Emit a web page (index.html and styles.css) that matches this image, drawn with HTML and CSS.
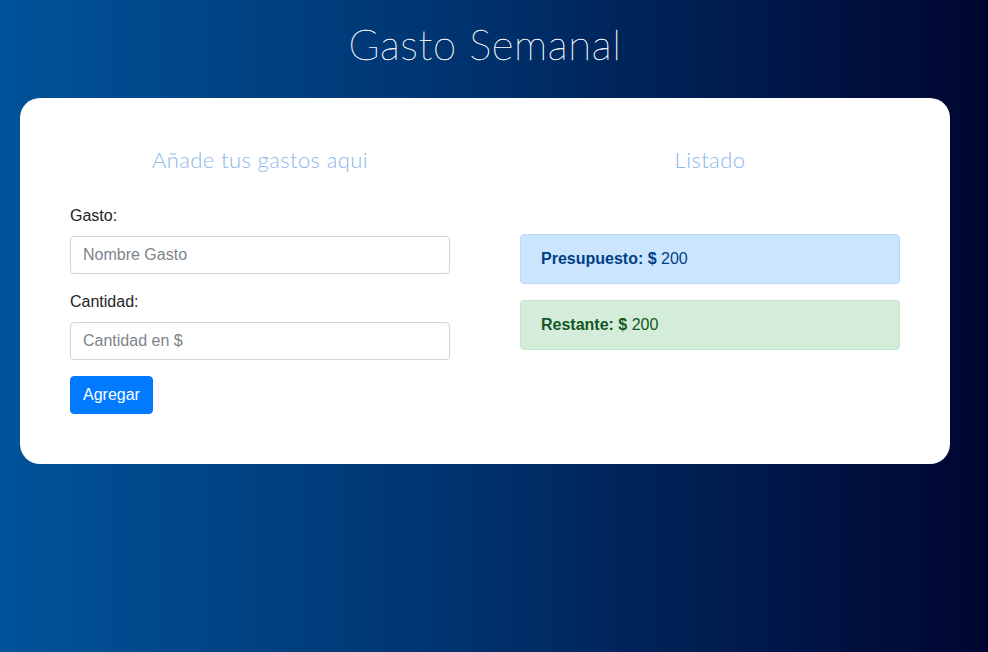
FILE: index.html
```html
<!DOCTYPE html>
<html lang="es">
<head>
<meta charset="utf-8">
<title>Gasto Semanal</title>
<link rel="stylesheet" href="styles.css">
</head>
<body>
<div class="page">
  <header class="header">
    <h1 class="title">Gasto Semanal</h1>
  </header>
  <main class="card">
    <section class="col">
      <h2 class="col-title">Añade tus gastos aqui</h2>
      <form class="form">
        <div class="field">
          <label class="label">Gasto:</label>
          <input class="input" type="text" placeholder="Nombre Gasto">
        </div>
        <div class="field">
          <label class="label">Cantidad:</label>
          <input class="input" type="text" placeholder="Cantidad en $">
        </div>
        <button class="btn" type="button">Agregar</button>
      </form>
    </section>
    <section class="col">
      <h2 class="col-title">Listado</h2>
      <div class="alerts">
        <div class="alert alert-primary"><strong>Presupuesto: $</strong> 200</div>
        <div class="alert alert-success"><strong>Restante: $</strong> 200</div>
      </div>
    </section>
  </main>
</div>
</body>
</html>
```
FILE: styles.css
```css
* { box-sizing: border-box; }
html, body { margin: 0; height: 100%; }
body {
  font-family: "Liberation Sans", Arial, sans-serif;
  font-size: 16px;
  line-height: 1.5;
  color: #212529;
  background: linear-gradient(to right, #00539a 0%, #003470 45%, #000530 100%);
}
.page { padding: 0 38px 0 20px; }
.header { display: flex; justify-content: center; padding-top: 20px; height: 98px; }
.title {
  margin: 0;
  font-family: Lato, "Open Sans", sans-serif;
  font-weight: 100;
  font-size: 42px;
  letter-spacing: 0.6px;
  line-height: 48px;
  color: #ffffff;
  -webkit-text-stroke: 0.35px #ffffff;
}
.card {
  background: #fff;
  border-radius: 20px;
  width: 930px;
  padding: 46px 50px 50px;
  display: grid;
  grid-template-columns: 380px 380px;
  column-gap: 70px;
}
.col-title {
  margin: 0 0 28px;
  text-align: center;
  font-family: Lato, "Open Sans", sans-serif;
  font-weight: 300;
  font-size: 22px;
  letter-spacing: 0.4px;
  line-height: 32px;
  color: #8db6ea;
}
.field { margin-bottom: 16px; }
.label { display: block; margin-bottom: 8px; line-height: 24px; }
.input {
  display: block;
  width: 100%;
  height: 38px;
  padding: 6px 12px;
  font: inherit;
  font-size: 16px;
  color: #495057;
  border: 1px solid #ced4da;
  border-radius: 4px;
  background: #fff;
}
.input::placeholder { color: #7d848b; }
.btn {
  font: inherit;
  font-size: 16px;
  line-height: 24px;
  color: #fff;
  background: #007bff;
  border: 1px solid #007bff;
  border-radius: 4px;
  padding: 6px 12px;
}
.alerts { padding-top: 30px; }
.alert {
  padding: 12px 20px;
  margin-bottom: 16px;
  border: 1px solid transparent;
  border-radius: 4px;
  line-height: 24px;
}
.alert-primary { background: #cce5ff; border-color: #b8daff; color: #004085; }
.alert-success { background: #d4edda; border-color: #c3e6cb; color: #155724; }
```
